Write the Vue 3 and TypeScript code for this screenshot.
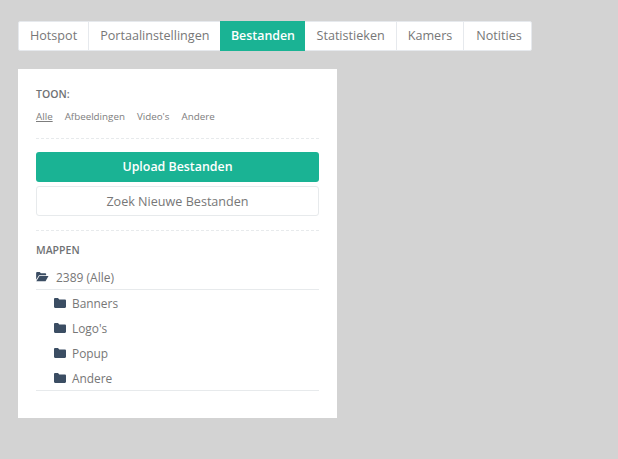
<script setup lang="ts">
const tabs: string[] = ['Hotspot', 'Portaalinstellingen', 'Bestanden', 'Statistieken', 'Kamers', 'Notities']
const filters: string[] = ['Alle', 'Afbeeldingen', "Video's", 'Andere']
const folders: string[] = ['Banners', "Logo's", 'Popup', 'Andere']
</script>

<template>
  <div class="page">
    <nav class="tabs">
      <a v-for="t in tabs" :key="t" class="tab" :class="{ active: t === 'Bestanden' }">{{ t }}</a>
    </nav>
    <section class="card">
      <h4 class="label">TOON:</h4>
      <div class="filters">
        <a v-for="(f, i) in filters" :key="f" class="filter" :class="{ current: i === 0 }">{{ f }}</a>
      </div>
      <div class="dash first"></div>
      <button class="btn primary">Upload Bestanden</button>
      <button class="btn plain">Zoek Nieuwe Bestanden</button>
      <div class="dash second"></div>
      <h4 class="label mappen">MAPPEN</h4>
      <div class="root">
        <svg class="open" viewBox="0 0 14 11" width="13" height="10">
          <path d="M0 1C0 .4.4 0 1 0h3l1.200 1.300H10c.6 0 1 .4 1 1V3.500H3.200L0 8.500V1z" fill="#3b4d63"/>
          <path d="M3.600 4.300H13.600L10.400 10.300H0.200z" fill="#3b4d63"/>
        </svg>
        <span>2389 (Alle)</span>
      </div>
      <ul class="list">
        <li v-for="f in folders" :key="f" class="item">
          <svg class="closed" viewBox="0 0 12 10" width="12" height="10">
            <path d="M0 1.200C0 .5.500 0 1.200 0H4l1.300 1.400h5.500c.7 0 1.200.5 1.200 1.200v6.200c0 .7-.5 1.200-1.200 1.200H1.200C.5 10 0 9.500 0 8.800V1.200z" fill="#3b4d63"/>
          </svg>
          <span>{{ f }}</span>
        </li>
      </ul>
    </section>
  </div>
</template>

<style>
html, body { background: #d3d3d3; }
</style>

<style scoped>
.page {
  padding: 21px 18px 0;
  font-family: "Open Sans", sans-serif;
  color: #777;
}
.tabs {
  display: inline-flex;
  background: #fff;
  border: 1px solid #e6e9ed;
  border-radius: 2px;
  height: 30px;
  box-sizing: border-box;
  vertical-align: top;
}
.tab {
  display: flex;
  align-items: center;
  padding: 0 11px 1px;
  font-size: 12.600px;
  border-left: 1px solid #e6e9ed;
  color: #777;
}
.tab:first-child { border-left: 0; }
.tab:last-child { padding: 0 9px 1px 12px; }
.tab.active {
  background: #1ab394;
  color: #fff;
  font-weight: 550;
  font-size: 12.400px;
  padding: 0 10.500px 1px;
  margin: -1px 0;
  border-left: 0;
}
.tab.active + .tab { border-left: 0; }
.card {
  width: 319px;
  height: 349px;
  box-sizing: border-box;
  margin-top: 18px;
  padding: 18px;
  background: #fff;
}
.label {
  margin: 0;
  font-size: 10.500px;
  line-height: 15px;
  font-weight: 600;
  color: #6f7274;
}
.filters {
  display: flex;
  gap: 12px;
  margin-top: 8px;
}
.filter {
  font-size: 9.800px;
  line-height: 14px;
  color: #7d7d7d;
}
.filter.current { text-decoration: underline; }
.dash { border-top: 1px dashed #e7eaec; }
.first { margin-top: 14px; margin-bottom: 13px; }
.btn {
  display: block;
  width: 100%;
  height: 30px;
  box-sizing: border-box;
  font-family: inherit;
  font-size: 12.600px;
  border-radius: 3px;
  padding: 0;
}
.primary {
  background: #1ab394;
  border: 0;
  color: #fff;
  font-weight: 550;
  font-size: 12.400px;
  padding-bottom: 2px;
}
.plain {
  margin-top: 4px;
  background: #fff;
  border: 1px solid #e7eaec;
  color: #777;
}
.second { margin-top: 14px; }
.mappen { margin-top: 12px; }
.root {
  display: flex;
  align-items: center;
  gap: 7px;
  margin-top: 7px;
  height: 24px;
  font-size: 12px;
  border-bottom: 1px solid #e7eaec;
}
.list {
  list-style: none;
  margin: 0;
  padding: 0 0 0 18px;
  box-shadow: 0 1px 0 #e7eaec;
}
.item {
  display: flex;
  align-items: center;
  gap: 6px;
  height: 25px;
  font-size: 11.900px;
}
</style>
